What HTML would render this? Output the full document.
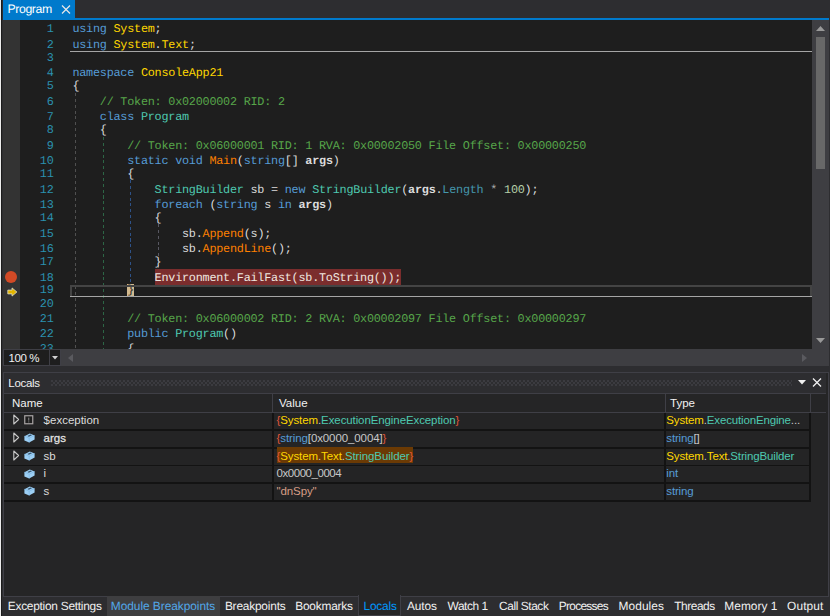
<!DOCTYPE html>
<html><head><meta charset="utf-8">
<style>
*{margin:0;padding:0;box-sizing:border-box}
html,body{width:830px;height:616px;overflow:hidden;background:#2d2d30}
body{position:relative;font-family:"Liberation Sans",sans-serif;color:#f1f1f1}
.abs{position:absolute}
#wl{position:absolute;left:0;top:0;width:1px;height:616px;background:#ececec}
#wl2{position:absolute;left:1px;top:0;width:1px;height:616px;background:#1c1c1c}
#tab{position:absolute;left:3px;top:0;width:72px;height:18px;background:#007acc}
#tab .t{position:absolute;left:4.5px;top:1.8px;font-size:12.3px;text-rendering:geometricPrecision;letter-spacing:-0.42px;color:#fff;line-height:14px}
#bluebar{position:absolute;left:3px;top:18px;width:826px;height:2px;background:#007acc}
#ed{position:absolute;left:3px;top:20px;width:809px;height:329px;background:#1e1e1e;overflow:hidden}
#gm{position:absolute;left:0;top:0;width:17px;height:329px;background:#333333}
#vs{position:absolute;left:812px;top:20px;width:17px;height:345px;background:#3e3e42}
#thumb{position:absolute;left:816px;top:37px;width:9px;height:132px;background:#686868}
.cl{position:absolute;left:69.4px;white-space:pre;font-family:"Liberation Mono",monospace;font-size:11.8px;letter-spacing:-0.23px;text-rendering:geometricPrecision;line-height:14.535px;height:14.535px;color:#dcdcdc}
.ln{position:absolute;left:0;width:50.5px;text-align:right;font-family:"Liberation Mono",monospace;font-size:11.8px;letter-spacing:-0.23px;text-rendering:geometricPrecision;line-height:14.535px;color:#2b91af}
.ig{position:absolute;width:1px;box-shadow:1px 0 0 rgba(30,30,30,0.5)}
.k{color:#569cd6}.ns{color:#ffd700}.ty{color:#4ec9b0}.cm{color:#57a64a}.me{color:#ff8000}.pr{color:#4597ad}
.pa{color:#dcdcdc;font-weight:bold}.lo{color:#dcdcdc}.nu{color:#b5cea8}.op{color:#b4b4b4}.pu{color:#dcdcdc}
.bp{background:#7b2d2d;color:#f0e8e0;padding:1.6px 0 0.6px}
.cur{color:#1e1e1e}
#sep1{position:absolute;left:70px;top:51px;width:742px;height:1px;background:#a5a5a5}
#curbox{position:absolute;left:70px;top:285px;width:741.5px;height:11px;border:2px solid #444444;border-bottom:none}
#sep2{position:absolute;left:70px;top:296px;width:742px;height:1px;background:#a5a5a5}
#zoom{position:absolute;left:3px;top:349px;width:46.5px;height:16.5px;background:#1e1e1e;border:1px solid #3f3f46}
#zoom .t{position:absolute;left:4.5px;top:1px;letter-spacing:-0.4px;font-size:11.5px;color:#f1f1f1;line-height:14px}
#zdd{position:absolute;left:49.5px;top:349px;width:11px;height:16.5px;background:#1e1e1e;border:1px solid #3f3f46;border-left:none}
#hs{position:absolute;left:60.5px;top:349px;width:768.5px;height:16.5px;background:#3e3e42}
#panel{position:absolute;left:3px;top:372px;width:826px;height:225px;background:#252526;border:1px solid #3f3f46}
#phdr{position:absolute;left:0;top:0;width:822px;height:21px;background:#2d2d30;border-bottom:1px solid #3f3f46}
#phdr .t{position:absolute;left:4.3px;top:2.5px;letter-spacing:-0.3px;font-size:11.5px;color:#f1f1f1;line-height:14px}
#grip{position:absolute;left:47px;top:6.5px;width:741px;height:6px;background-image:radial-gradient(circle at 1px 1px,#3b3b40 0.75px,transparent 1.05px),radial-gradient(circle at 3px 3px,#3b3b40 0.75px,transparent 1.05px);background-size:4px 4px,4px 4px}
#colhdr{position:absolute;left:0;top:21px;width:822px;height:19px;border-bottom:1px solid #3f3f46}
.ch{position:absolute;top:1.5px;font-size:11.5px;line-height:14px;color:#f1f1f1}
.cs{position:absolute;top:0;width:1px;height:18px;background:#3f3f46}
.row{position:absolute;left:0;width:806px;background:#242425}
.sepr{position:absolute;left:0;width:806px;height:1.5px;background:#131313}
.rt{position:absolute;font-size:11.5px;line-height:14px;color:#dcdcdc;white-space:pre}
.vs{position:absolute;width:1.5px;background:#131313}
#btabs{position:absolute;left:0;top:596px;width:830px;height:20px}
.bt{position:absolute;top:3px;font-size:11.9px;text-rendering:geometricPrecision;line-height:14px;color:#f1f1f1;white-space:nowrap}
.b{color:#e0563b}.g{color:#c8c8c8}.st{color:#d69d85}
</style></head><body>
<div id="wl"></div><div id="wl2"></div>
<div id="tab"><div class="t">Program</div>
<svg class="abs" style="left:57.5px;top:4.5px" width="10" height="9" viewBox="0 0 10 9"><path d="M1 0.5L9 8.5M9 0.5L1 8.5" stroke="#e8e8e8" stroke-width="1.2"/></svg></div>
<div id="bluebar"></div>
<div id="ed"><div id="gm"></div>
<div class="abs" style="left:2px;top:250.5px;width:12px;height:12px;border-radius:50%;background:#d24a26"></div>
<svg class="abs" style="left:3.6px;top:266.6px" width="11" height="10" viewBox="0 0 11 10"><path d="M0.8 3.1H5V0.9L9.9 5L5 9.1V6.9H0.8Z" fill="#e3b500" stroke="#dcdccc" stroke-width="0.8" stroke-linejoin="round"/></svg>
<div class="ig" style="left:72px;top:73.0px;height:256.0px;background:repeating-linear-gradient(to bottom,#505050 0 3px,transparent 3px 5.85px)"></div>
<div class="ig" style="left:100px;top:116.6px;height:212.4px;background:repeating-linear-gradient(to bottom,#2d6646 0 3px,transparent 3px 5.85px)"></div>
<div class="ig" style="left:127px;top:160.2px;height:103.7px;background:repeating-linear-gradient(to bottom,#2e5288 0 3px,transparent 3px 5.85px)"></div>
<div class="ig" style="left:155px;top:203.8px;height:45.6px;background:repeating-linear-gradient(to bottom,#585862 0 3px,transparent 3px 5.85px)"></div>
<div class="abs" style="left:124px;top:264px;width:7px;height:12px;background:#d2b98f"></div>
<div class="ln" style="top:2.30px">1</div>
<div class="ln" style="top:17.84px">2</div>
<div class="ln" style="top:31.37px">3</div>
<div class="ln" style="top:45.91px">4</div>
<div class="ln" style="top:59.44px">5</div>
<div class="ln" style="top:74.97px">6</div>
<div class="ln" style="top:89.51px">7</div>
<div class="ln" style="top:103.05px">8</div>
<div class="ln" style="top:118.58px">9</div>
<div class="ln" style="top:134.12px">10</div>
<div class="ln" style="top:146.65px">11</div>
<div class="ln" style="top:163.19px">12</div>
<div class="ln" style="top:177.72px">13</div>
<div class="ln" style="top:191.26px">14</div>
<div class="ln" style="top:206.79px">15</div>
<div class="ln" style="top:222.33px">16</div>
<div class="ln" style="top:234.86px">17</div>
<div class="ln" style="top:251.09px">18</div>
<div class="ln" style="top:262.93px">19</div>
<div class="ln" style="top:276.97px">20</div>
<div class="ln" style="top:292.00px">21</div>
<div class="ln" style="top:307.04px">22</div>
<div class="ln" style="top:322.07px">23</div>
<div class="cl" style="top:2.30px"><span class="k">using</span><span class="pu"> </span><span class="ns">System</span><span class="pu">;</span></div>
<div class="cl" style="top:17.84px"><span class="k">using</span><span class="pu"> </span><span class="ns">System</span><span class="pu">.</span><span class="ns">Text</span><span class="pu">;</span></div>
<div class="cl" style="top:31.37px"></div>
<div class="cl" style="top:45.91px"><span class="k">namespace</span><span class="pu"> </span><span class="ns">ConsoleApp21</span></div>
<div class="cl" style="top:59.44px"><span class="pu">{</span></div>
<div class="cl" style="top:74.97px"><span class="pu">    </span><span class="cm">// Token: 0x02000002 RID: 2</span></div>
<div class="cl" style="top:89.51px"><span class="pu">    </span><span class="k">class</span><span class="pu"> </span><span class="ty">Program</span></div>
<div class="cl" style="top:103.05px"><span class="pu">    {</span></div>
<div class="cl" style="top:118.58px"><span class="pu">        </span><span class="cm">// Token: 0x06000001 RID: 1 RVA: 0x00002050 File Offset: 0x00000250</span></div>
<div class="cl" style="top:134.12px"><span class="pu">        </span><span class="k">static</span><span class="pu"> </span><span class="k">void</span><span class="pu"> </span><span class="me">Main</span><span class="pu">(</span><span class="k">string</span><span class="pu">[] </span><span class="pa">args</span><span class="pu">)</span></div>
<div class="cl" style="top:146.65px"><span class="pu">        {</span></div>
<div class="cl" style="top:163.19px"><span class="pu">            </span><span class="ty">StringBuilder</span><span class="pu"> </span><span class="lo">sb</span><span class="pu"> = </span><span class="k">new</span><span class="pu"> </span><span class="ty">StringBuilder</span><span class="pu">(</span><span class="pa">args</span><span class="pu">.</span><span class="pr">Length</span><span class="op"> * </span><span class="nu">100</span><span class="pu">);</span></div>
<div class="cl" style="top:177.72px"><span class="pu">            </span><span class="k">foreach</span><span class="pu"> (</span><span class="k">string</span><span class="pu"> </span><span class="lo">s</span><span class="pu"> </span><span class="k">in</span><span class="pu"> </span><span class="pa">args</span><span class="pu">)</span></div>
<div class="cl" style="top:191.26px"><span class="pu">            {</span></div>
<div class="cl" style="top:206.79px"><span class="pu">                </span><span class="lo">sb</span><span class="pu">.</span><span class="me">Append</span><span class="pu">(</span><span class="lo">s</span><span class="pu">);</span></div>
<div class="cl" style="top:222.33px"><span class="pu">                </span><span class="lo">sb</span><span class="pu">.</span><span class="me">AppendLine</span><span class="pu">();</span></div>
<div class="cl" style="top:234.86px"><span class="pu">            }</span></div>
<div class="cl" style="top:251.09px"><span class="pu">            </span><span class="bp">Environment.FailFast(sb.ToString());</span></div>
<div class="cl" style="top:262.93px"><span class="pu">        </span><span class="cur">}</span></div>
<div class="cl" style="top:276.97px"></div>
<div class="cl" style="top:292.00px"><span class="pu">        </span><span class="cm">// Token: 0x06000002 RID: 2 RVA: 0x00002097 File Offset: 0x00000297</span></div>
<div class="cl" style="top:307.04px"><span class="pu">        </span><span class="k">public</span><span class="pu"> </span><span class="ty">Program</span><span class="pu">()</span></div>
<div class="cl" style="top:322.07px"><span class="pu">        {</span></div>
</div>
<div id="sep1"></div>
<div id="curbox"></div><div id="sep2"></div>
<div id="vs"></div><div id="thumb"></div>
<svg class="abs" style="left:816px;top:26px" width="9" height="5" viewBox="0 0 9 5"><path d="M4.5 0L9 5H0Z" fill="#999999"/></svg>
<svg class="abs" style="left:816px;top:338px" width="9" height="5" viewBox="0 0 9 5"><path d="M0 0H9L4.5 5Z" fill="#999999"/></svg>
<div id="zoom"><div class="t">100 %</div></div><div id="zdd"><svg class="abs" style="left:2.5px;top:6px" width="6" height="4" viewBox="0 0 6 4"><path d="M0 0H6L3 3.5Z" fill="#d0d0d0"/></svg></div>
<div id="hs"></div>
<svg class="abs" style="left:67.5px;top:353.5px" width="5" height="8" viewBox="0 0 5 8"><path d="M5 0V8L0 4Z" fill="#5a5a5f"/></svg>
<svg class="abs" style="left:801.5px;top:353.5px" width="5" height="8" viewBox="0 0 5 8"><path d="M0 0V8L5 4Z" fill="#5a5a5f"/></svg>
<div id="panel">
 <div id="phdr"><div class="t">Locals</div><div id="grip"></div>
  <svg class="abs" style="left:793.8px;top:7px" width="8" height="5" viewBox="0 0 8 5"><path d="M0 0H8L4 4.5Z" fill="#f1f1f1"/></svg>
  <svg class="abs" style="left:808.3px;top:5px" width="10" height="9" viewBox="0 0 10 9"><path d="M1 0.5L9 8.5M9 0.5L1 8.5" stroke="#f1f1f1" stroke-width="1.3"/></svg>
 </div>
 <div id="colhdr">
  <div class="ch" style="left:8px">Name</div>
  <div class="cs" style="left:268px"></div>
  <div class="ch" style="left:275px">Value</div>
  <div class="cs" style="left:660.5px"></div>
  <div class="ch" style="left:666px">Type</div>
  <div class="cs" style="left:806px"></div>
 </div>
<div class="sepr" style="top:56px"></div>
<div class="sepr" style="top:74px"></div>
<div class="sepr" style="top:91.5px"></div>
<div class="sepr" style="top:109px"></div>
<div class="sepr" style="top:127px"></div>
<div class="row" style="top:40.00px;height:16px"><svg class="abs" style="left:9px;top:1.30px" width="7" height="11" viewBox="0 0 7 11"><path d="M0.8 1L5.6 5.5L0.8 10Z" fill="none" stroke="#c8c8c8" stroke-width="1.1" stroke-linejoin="round"/></svg><svg class="abs" style="left:20px;top:2.20px" width="10" height="10" viewBox="0 0 10 10"><rect x="0.75" y="0.75" width="8" height="8" fill="#1e1e1e" stroke="#a8a4a4" stroke-width="1.2"/><path d="M4.75 2.6V5.6M4.75 6.4V7.4" stroke="#8c8c8c" stroke-width="1"/></svg><div class="rt" style="top:-0.38px;left:39.6px">$exception</div><div class="rt" style="top:-0.38px;left:272.5px;letter-spacing:-0.1px"><span class="b">{</span><span class="ns">System</span><span class="g">.</span><span class="ty">ExecutionEngineException</span><span class="b">}</span></div><div class="rt" style="top:-0.38px;left:662.3px;letter-spacing:-0.15px"><span class="ns">System</span><span class="g">.</span><span class="ty">ExecutionEngine</span><span class="g">...</span></div></div>
<div class="row" style="top:58.00px;height:16px"><svg class="abs" style="left:9px;top:1.30px" width="7" height="11" viewBox="0 0 7 11"><path d="M0.8 1L5.6 5.5L0.8 10Z" fill="none" stroke="#c8c8c8" stroke-width="1.1" stroke-linejoin="round"/></svg><svg class="abs" style="left:20px;top:2.00px" width="11" height="10" viewBox="0 0 11 10"><path d="M0.4 3.2L5.8 0.5L10.6 2.4V6.4L5.2 9.5L0.4 7.4Z" fill="#9dcff4"/><path d="M0.4 3.2L5.2 5.2L10.6 2.4M5.2 5.2V9.5" stroke="#78b4e2" stroke-width="0.6" fill="none"/><path d="M3.3 3.1L6.4 1.6L8 2.3L4.9 3.8Z" fill="#34536e"/></svg><div class="rt" style="top:-0.38px;left:39.6px;-webkit-text-stroke:0.3px #dcdcdc;color:#e8e8e8">args</div><div class="rt" style="top:-0.38px;left:272.5px;letter-spacing:-0.1px"><span class="b">{</span><span class="k">string</span><span class="g">[0x0000_0004]</span><span class="b">}</span></div><div class="rt" style="top:-0.38px;left:662.3px;letter-spacing:-0.15px"><span class="k">string</span><span class="g">[]</span></div></div>
<div class="row" style="top:76.00px;height:15.5px"><svg class="abs" style="left:9px;top:1.40px" width="7" height="11" viewBox="0 0 7 11"><path d="M0.8 1L5.6 5.5L0.8 10Z" fill="none" stroke="#c8c8c8" stroke-width="1.1" stroke-linejoin="round"/></svg><svg class="abs" style="left:20px;top:2.10px" width="11" height="10" viewBox="0 0 11 10"><path d="M0.4 3.2L5.8 0.5L10.6 2.4V6.4L5.2 9.5L0.4 7.4Z" fill="#9dcff4"/><path d="M0.4 3.2L5.2 5.2L10.6 2.4M5.2 5.2V9.5" stroke="#78b4e2" stroke-width="0.6" fill="none"/><path d="M3.3 3.1L6.4 1.6L8 2.3L4.9 3.8Z" fill="#34536e"/></svg><div class="rt" style="top:-0.28px;left:39.6px">sb</div><div class="rt" style="top:-2.00px;left:272.5px;letter-spacing:-0.1px;background:#6b3a04;padding-top:1.72px;padding-bottom:0.5px"><span class="b">{</span><span class="ns">System</span><span class="g">.</span><span class="ns">Text</span><span class="g">.</span><span class="ty">StringBuilder</span><span class="b">}</span></div><div class="rt" style="top:-0.28px;left:662.3px;letter-spacing:-0.15px"><span class="ns">System</span><span class="g">.</span><span class="ns">Text</span><span class="g">.</span><span class="ty">StringBuilder</span></div></div>
<div class="row" style="top:93.50px;height:15.5px"><svg class="abs" style="left:20px;top:2.10px" width="11" height="10" viewBox="0 0 11 10"><path d="M0.4 3.2L5.8 0.5L10.6 2.4V6.4L5.2 9.5L0.4 7.4Z" fill="#9dcff4"/><path d="M0.4 3.2L5.2 5.2L10.6 2.4M5.2 5.2V9.5" stroke="#78b4e2" stroke-width="0.6" fill="none"/><path d="M3.3 3.1L6.4 1.6L8 2.3L4.9 3.8Z" fill="#34536e"/></svg><div class="rt" style="top:-0.28px;left:39.6px">i</div><div class="rt" style="top:-0.28px;left:272.5px;letter-spacing:-0.1px"><span class="g" style="letter-spacing:-0.45px">0x0000_0004</span></div><div class="rt" style="top:-0.28px;left:662.3px;letter-spacing:-0.15px"><span class="k">int</span></div></div>
<div class="row" style="top:111.00px;height:16px"><svg class="abs" style="left:20px;top:2.20px" width="11" height="10" viewBox="0 0 11 10"><path d="M0.4 3.2L5.8 0.5L10.6 2.4V6.4L5.2 9.5L0.4 7.4Z" fill="#9dcff4"/><path d="M0.4 3.2L5.2 5.2L10.6 2.4M5.2 5.2V9.5" stroke="#78b4e2" stroke-width="0.6" fill="none"/><path d="M3.3 3.1L6.4 1.6L8 2.3L4.9 3.8Z" fill="#34536e"/></svg><div class="rt" style="top:-0.18px;left:39.6px">s</div><div class="rt" style="top:-0.18px;left:272.5px;letter-spacing:-0.1px"><span class="st">"dnSpy"</span></div><div class="rt" style="top:-0.18px;left:662.3px;letter-spacing:-0.15px"><span class="k">string</span></div></div>
<div class="vs" style="left:268px;top:40px;height:89px"></div><div class="vs" style="left:660px;top:40px;height:89px"></div><div class="vs" style="left:805.2px;top:40px;height:89px"></div>
</div>
<div id="btabs">
<div class="abs" style="left:106.7px;top:0;width:113.5px;height:20px;background:#3e3e40"></div>
<div class="abs" style="left:358.3px;top:-1px;width:43px;height:21px;background:#252526;border:1px solid #3f3f46;border-top:none"></div>
<div class="bt" style="left:7.8px;color:#f1f1f1;letter-spacing:-0.26px">Exception Settings</div>
<div class="bt" style="left:110.8px;color:#52a7e8;letter-spacing:-0.04px">Module Breakpoints</div>
<div class="bt" style="left:224.9px;color:#f1f1f1;letter-spacing:-0.20px">Breakpoints</div>
<div class="bt" style="left:295.2px;color:#f1f1f1;letter-spacing:-0.20px">Bookmarks</div>
<div class="bt" style="left:363.5px;color:#0097fb;letter-spacing:-0.20px">Locals</div>
<div class="bt" style="left:406.9px;color:#f1f1f1;letter-spacing:-0.10px">Autos</div>
<div class="bt" style="left:447.6px;color:#f1f1f1;letter-spacing:-0.45px">Watch 1</div>
<div class="bt" style="left:499.1px;color:#f1f1f1;letter-spacing:-0.42px">Call Stack</div>
<div class="bt" style="left:558.8px;color:#f1f1f1;letter-spacing:-0.70px">Processes</div>
<div class="bt" style="left:618.6px;color:#f1f1f1;letter-spacing:0.07px">Modules</div>
<div class="bt" style="left:674.2px;color:#f1f1f1;letter-spacing:-0.43px">Threads</div>
<div class="bt" style="left:724.3px;color:#f1f1f1;letter-spacing:0.04px">Memory 1</div>
<div class="bt" style="left:787.0px;color:#f1f1f1;letter-spacing:0.14px">Output</div>
</div>
</body></html>
